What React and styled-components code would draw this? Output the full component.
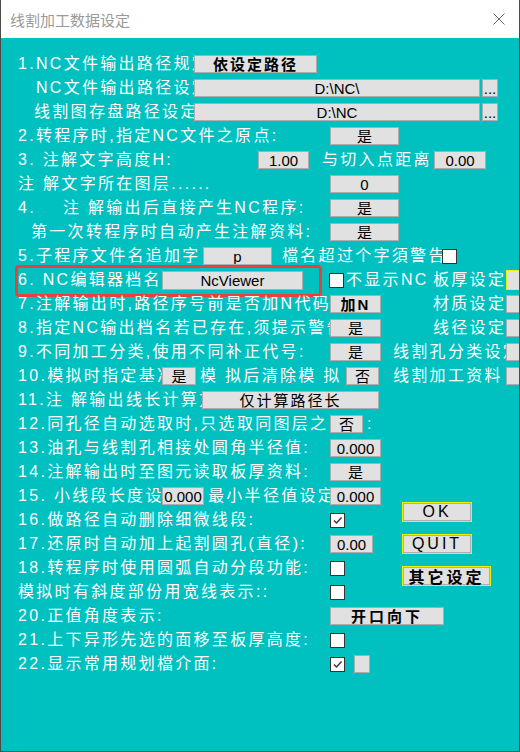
import React from 'react';
import styled, { createGlobalStyle } from 'styled-components';

const GlobalStyle = createGlobalStyle`
  html, body {
    margin: 0;
    padding: 0;
    background: #fff;
  }
  body {
    font-family: "Liberation Sans", "Noto Sans CJK SC", sans-serif;
  }
`;

const Window = styled.div`
  width: 520px;
  height: 752px;
  box-sizing: border-box;
  border: 1px solid #4a4a4a;
  border-top: none;
  display: flex;
  flex-direction: column;
  overflow: hidden;
  background: #00c0c0;
`;

const TitleBar = styled.div`
  height: 38px;
  flex-shrink: 0;
  background: #fff;
  display: flex;
  align-items: center;
  justify-content: space-between;
  padding: 0 14px 0 9px;
`;

const Title = styled.span`
  font-family: "Noto Sans CJK SC", sans-serif;
  font-size: 15px;
  color: #9a9a9a;
`;

const Client = styled.div`
  flex: 1;
  padding-top: 14px;
  display: flex;
  flex-direction: column;
`;

const Row = styled.div`
  position: relative;
  display: flex;
  align-items: center;
  height: 24px;
  padding-left: 17px;
  white-space: nowrap;
`;

const Label = styled.span`
  flex-shrink: 0;
  box-sizing: border-box;
  width: ${(p) => (p.$w ? `${p.$w}px` : 'auto')};
  padding-left: ${(p) => p.$pad || 0}px;
  margin-left: ${(p) => p.$ml || 0}px;
  overflow: hidden;
  color: #fff;
  font-family: "Liberation Sans", "Noto Sans CJK SC", sans-serif;
  font-size: 16px;
  letter-spacing: 2.3px;
  line-height: 24px;
`;

const Ctl = styled.div`
  flex-shrink: 0;
  box-sizing: border-box;
  width: ${(p) => p.$w}px;
  height: ${(p) => p.$h || 18}px;
  margin-left: ${(p) => p.$ml || 0}px;
  background: #e1e1e1;
  border: 1px solid #adadad;
  display: flex;
  align-items: center;
  justify-content: center;
  overflow: hidden;
  color: #000;
  font-family: "Liberation Sans", "Noto Sans CJK SC", sans-serif;
  font-size: 15px;
  font-weight: ${(p) => (p.$bold ? 700 : 400)};
  letter-spacing: ${(p) => p.$ls || 0}px;
  line-height: 1;
`;

const SideBox = styled.div`
  flex-shrink: 0;
  box-sizing: border-box;
  width: 24px;
  height: ${(p) => (p.$focus ? 20 : 18)}px;
  background: #e1e1e1;
  border: 1px solid ${(p) => (p.$focus ? '#f0f000' : '#adadad')};
`;

const Check = styled.div`
  flex-shrink: 0;
  box-sizing: border-box;
  width: 15px;
  height: 15px;
  margin-left: ${(p) => p.$ml || 0}px;
  background: #fff;
  border: 1px solid #333;
  display: flex;
  align-items: center;
  justify-content: center;
`;

const Highlight = styled.div`
  position: absolute;
  left: 14px;
  top: -3px;
  width: 307px;
  height: 32px;
  box-sizing: border-box;
  border: 3px solid #e8413c;
  border-radius: 4px;
  pointer-events: none;
`;

const Split = styled.div`
  display: grid;
  grid-template-columns: 401px 1fr;
`;

const ButtonStack = styled.div`
  display: flex;
  flex-direction: column;
  align-items: flex-start;
  gap: 12px;
  padding-top: 18px;
`;

const BigButton = styled.div`
  box-sizing: border-box;
  width: ${(p) => p.$w}px;
  height: 20px;
  background: #e1e1e1;
  border: 1px solid #f0f000;
  box-shadow: inset 0 0 0 1px #adadad;
  display: flex;
  align-items: center;
  justify-content: center;
  color: #000;
  font-family: "Liberation Sans", "Noto Sans CJK SC", sans-serif;
  font-size: 16px;
  font-weight: ${(p) => (p.$bold ? 700 : 400)};
  letter-spacing: 3px;
`;

const CloseIcon = () => (
  <svg width="12" height="12" viewBox="0 0 12 12">
    <path d="M0.5 0.5 L11.5 11.5 M11.5 0.5 L0.5 11.5" stroke="#666" strokeWidth="1" />
  </svg>
);

const Tick = () => (
  <svg width="13" height="13" viewBox="0 0 13 13">
    <path d="M3 6.5 L5.5 9 L10.5 3.5" stroke="#333" strokeWidth="1.4" fill="none" />
  </svg>
);

const Box = ({ checked, ml }) => <Check $ml={ml}>{checked && <Tick />}</Check>;

const App = () => {
  return (
    <>
      <GlobalStyle />
      <Window>
        <TitleBar>
          <Title>线割加工数据设定</Title>
          <CloseIcon />
        </TitleBar>
        <Client>
          <Row>
            <Label $w={176}>1.NC文件输出路径规定:</Label>
            <Ctl $w={123} $bold $ls={2}>依设定路径</Ctl>
          </Row>
          <Row>
            <Label $w={176} $pad={18}>NC文件输出路径设定</Label>
            <Ctl $w={286}>D:\NC\</Ctl>
            <Ctl $w={16} $ml={2}>...</Ctl>
          </Row>
          <Row>
            <Label $w={176} $pad={16}>线割图存盘路径设定</Label>
            <Ctl $w={286}>D:\NC</Ctl>
            <Ctl $w={16} $ml={2}>...</Ctl>
          </Row>
          <Row>
            <Label $w={312}>2.转程序时,指定NC文件之原点:</Label>
            <Ctl $w={69}>是</Ctl>
          </Row>
          <Row>
            <Label $w={240}>3. 注解文字高度H:</Label>
            <Ctl $w={51}>1.00</Ctl>
            <Label $w={112} $ml={13}>与切入点距离</Label>
            <Ctl $w={52}>0.00</Ctl>
          </Row>
          <Row>
            <Label $w={312}>注 解文字所在图层......</Label>
            <Ctl $w={69}>0</Ctl>
          </Row>
          <Row>
            <Label $w={312}>4.&nbsp;&nbsp;&nbsp; 注 解输出后直接产生NC程序:</Label>
            <Ctl $w={69}>是</Ctl>
          </Row>
          <Row>
            <Label $w={312} $pad={13}>第一次转程序时自动产生注解资料:</Label>
            <Ctl $w={69}>是</Ctl>
          </Row>
          <Row>
            <Label $w={185}>5.子程序文件名追加字</Label>
            <Ctl $w={69}>p</Ctl>
            <Label $w={160} $ml={10}>檔名超过个字須警告</Label>
            <Box />
          </Row>
          <Row>
            <Highlight />
            <Label $w={144}>6.&nbsp;NC编辑器档名</Label>
            <Ctl $w={141} $h={19}>NcViewer</Ctl>
            <Box ml={26} />
            <Label $w={87} $ml={2}>不显示NC</Label>
            <Label $w={73}>板厚设定</Label>
            <SideBox $focus />
          </Row>
          <Row>
            <Label $w={312}>7.注解输出时,路径序号前是否加N代码</Label>
            <Ctl $w={51} $bold $ls={2}>加N</Ctl>
            <Label $w={73} $ml={52}>材质设定</Label>
            <SideBox />
          </Row>
          <Row>
            <Label $w={312}>8.指定NC输出档名若已存在,须提示警告</Label>
            <Ctl $w={51}>是</Ctl>
            <Label $w={73} $ml={52}>线径设定</Label>
            <SideBox />
          </Row>
          <Row>
            <Label $w={312}>9.不同加工分类,使用不同补正代号:</Label>
            <Ctl $w={51}>是</Ctl>
            <Label $w={113} $ml={12}>线割孔分类设定</Label>
            <SideBox />
          </Row>
          <Row>
            <Label $w={144}>10.模拟时指定基准</Label>
            <Ctl $w={34}>是</Ctl>
            <Label $w={146} $ml={4}>模 拟后清除模 拟</Label>
            <Ctl $w={33}>否</Ctl>
            <Label $w={113} $ml={14}>线割加工资料</Label>
            <SideBox />
          </Row>
          <Row>
            <Label $w={184}>11.注 解输出线长计算方式</Label>
            <Ctl $w={177} $ls={2}>仅计算路径长</Ctl>
          </Row>
          <Row>
            <Label $w={312}>12.同孔径自动选取时,只选取同图层之</Label>
            <Ctl $w={33}>否</Ctl>
            <Label $ml={4}>:</Label>
          </Row>
          <Row>
            <Label $w={312}>13.油孔与线割孔相接处圆角半径值:</Label>
            <Ctl $w={51}>0.000</Ctl>
          </Row>
          <Row>
            <Label $w={312}>14.注解输出时至图元读取板厚资料:</Label>
            <Ctl $w={51}>是</Ctl>
          </Row>
          <Split>
            <div>
              <Row>
                <Label $w={144}>15. 小线段长度设定</Label>
                <Ctl $w={42}>0.000</Ctl>
                <Label $w={122} $ml={4}>最小半径值设定</Label>
                <Ctl $w={51}>0.000</Ctl>
              </Row>
              <Row>
                <Label $w={312}>16.做路径自动删除细微线段:</Label>
                <Box checked />
              </Row>
              <Row>
                <Label $w={312}>17.还原时自动加上起割圆孔(直径):</Label>
                <Ctl $w={43}>0.00</Ctl>
              </Row>
              <Row>
                <Label $w={312}>18.转程序时使用圆弧自动分段功能:</Label>
                <Box />
              </Row>
              <Row>
                <Label $w={312}>模拟时有斜度部份用宽线表示::</Label>
                <Box />
              </Row>
            </div>
            <ButtonStack>
              <BigButton $w={70}>OK</BigButton>
              <BigButton $w={70}>QUIT</BigButton>
              <BigButton $w={89} $bold>其它设定</BigButton>
            </ButtonStack>
          </Split>
          <Row>
            <Label $w={312}>20.正值角度表示:</Label>
            <Ctl $w={114} $bold $ls={3}>开口向下</Ctl>
          </Row>
          <Row>
            <Label $w={312}>21.上下异形先选的面移至板厚高度:</Label>
            <Box />
          </Row>
          <Row>
            <Label $w={312}>22.显示常用规划檔介面:</Label>
            <Box checked />
            <Ctl $w={16} $ml={9} />
          </Row>
        </Client>
      </Window>
    </>
  );
};

export default App;
